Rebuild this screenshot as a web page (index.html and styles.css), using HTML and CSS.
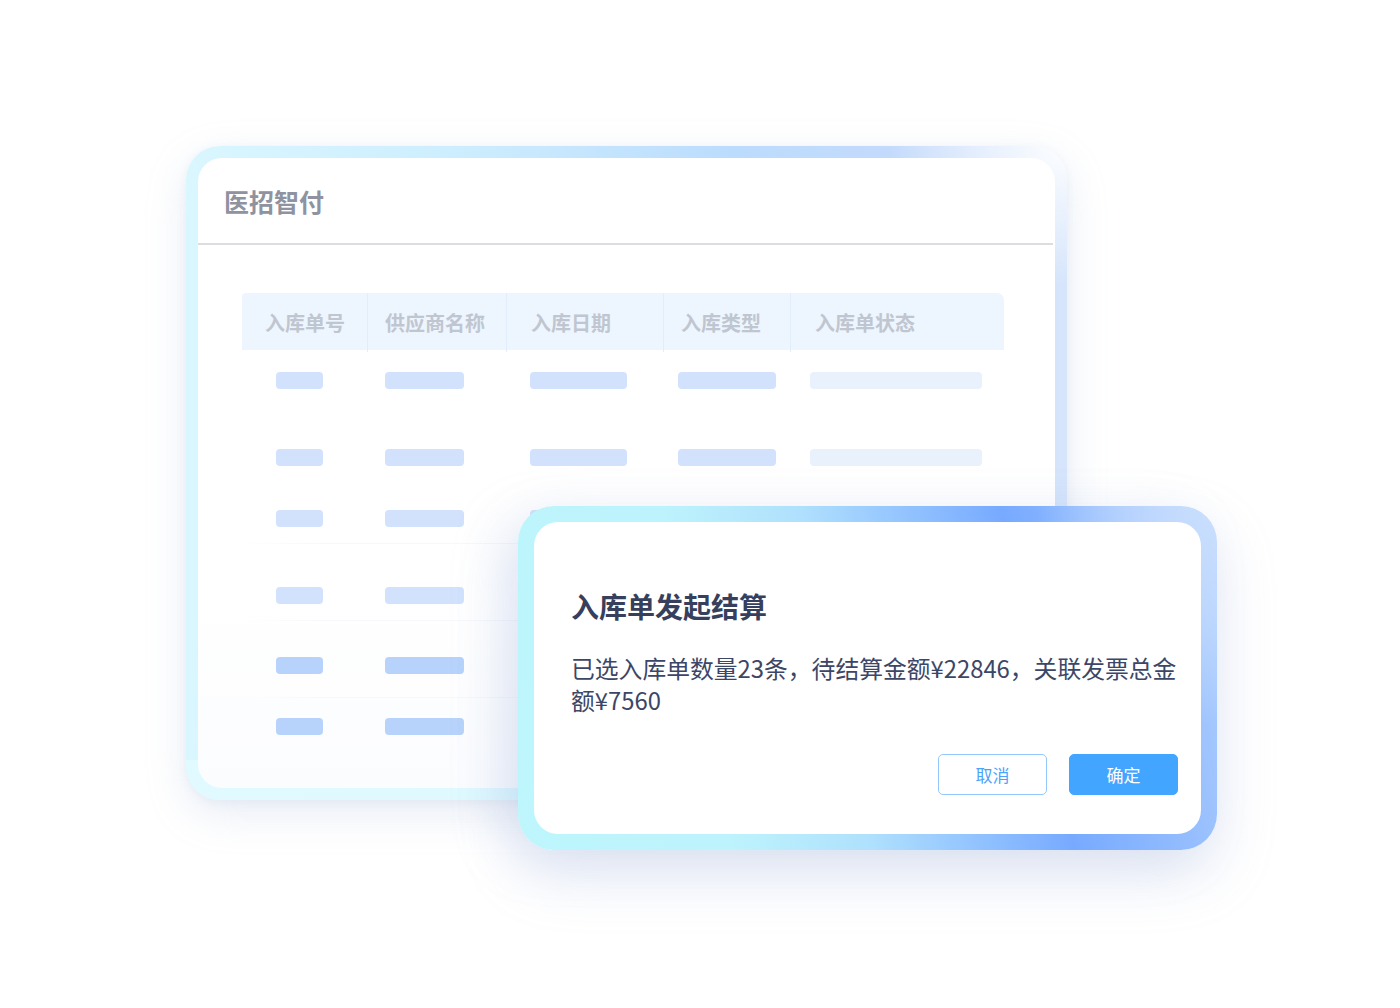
FILE: index.html
```html
<!DOCTYPE html>
<html lang="zh-CN">
<head>
<meta charset="utf-8">
<title>医招智付</title>
<link rel="stylesheet" href="styles.css">
</head>
<body>
<div class="stage">
  <section class="win back">
    <div class="win-inner back-inner">
      <header class="back-head">医招智付</header>
      <div class="table">
        <div class="thead">
          <div class="th">入库单号</div>
          <div class="th">供应商名称</div>
          <div class="th">入库日期</div>
          <div class="th">入库类型</div>
          <div class="th">入库单状态</div>
        </div>
        <div class="tbody">
          <div class="tr r1">
            <span class="bar"></span><span class="bar"></span><span class="bar"></span><span class="bar"></span><span class="bar pale"></span>
          </div>
          <div class="tr r2">
            <span class="bar"></span><span class="bar"></span><span class="bar"></span><span class="bar"></span><span class="bar pale"></span>
          </div>
          <div class="tr r3 sep">
            <span class="bar"></span><span class="bar"></span><span class="bar"></span><span class="bar"></span><span class="bar pale"></span>
          </div>
          <div class="tr r4 sep">
            <span class="bar"></span><span class="bar"></span><span class="bar"></span><span class="bar"></span><span class="bar pale"></span>
          </div>
          <div class="tr r5 sep dark">
            <span class="bar"></span><span class="bar"></span><span class="bar"></span><span class="bar"></span><span class="bar pale"></span>
          </div>
          <div class="tr r6 dark">
            <span class="bar"></span><span class="bar"></span><span class="bar"></span><span class="bar"></span><span class="bar pale"></span>
          </div>
        </div>
      </div>
    </div>
  </section>

  <section class="win dialog">
    <div class="win-inner dialog-inner">
      <h2 class="dlg-title">入库单发起结算</h2>
      <p class="dlg-text">已选入库单数量23条，待结算金额¥22846，关联发票总金<br>额¥7560</p>
      <div class="dlg-actions">
        <button class="btn btn-ghost">取消</button>
        <button class="btn btn-primary">确定</button>
      </div>
    </div>
  </section>
</div>
</body>
</html>
```

FILE: styles.css
```css
* { box-sizing: border-box; }
html, body { margin: 0; padding: 0; background: #ffffff; }
body {
  font-family: "Noto Sans CJK SC", "Noto Sans", "Liberation Sans", sans-serif;
}
.stage {
  position: relative;
  width: 1400px;
  height: 1008px;
  overflow: hidden;
  background: #ffffff;
}

/* floating windows */
.win {
  position: absolute;
}
.back {
  z-index: 1;
  left: 186px;
  top: 146px;
  width: 881px;
  height: 654px;
  padding: 12px;
  border-radius: 34px;
  background:
    radial-gradient(ellipse 180px 140px at 100% 0%, rgba(255,255,255,0.95), rgba(255,255,255,0) 100%),
    linear-gradient(90deg, #daf7ff 0%, #cdeefe 30%, #bcdcfd 62%, #c3dafc 80%, #d6e5fb 100%);
  box-shadow: 0 14px 40px rgba(150, 172, 210, 0.22), 0 2px 10px rgba(170, 190, 220, 0.15);
}
.back::after {
  content: "";
  position: absolute;
  left: 0; right: 0; bottom: 0;
  height: 40px;
  border-radius: 0 0 34px 34px;
  background: linear-gradient(90deg, #e0faff 0%, #def8ff 60%, #c9e8fb 100%);
  z-index: 0;
}
.win-inner {
  position: relative;
  z-index: 1;
  width: 100%;
  height: 100%;
  background: #ffffff;
}
.back-inner {
  border-radius: 24px;
  overflow: hidden;
  background: linear-gradient(180deg, #ffffff 70%, #fbfcfe 100%);
}
.back-head {
  height: 87px;
  padding: 24px 0 0 26px;
  font-size: 25px;
  line-height: 38px;
  font-weight: 700;
  color: #8e939f;
  border-bottom: 2px solid #dcdde0;
  margin-right: 2px;
}

.table {
  margin: 48px 51px 0 44px;
}
.thead, .tr {
  display: grid;
  grid-template-columns: 125px 139px 157px 127px 213px;
}
.thead {
  height: 57px;
  background: #edf5ff;
  border-radius: 4px 7px 0 0;
}
.th {
  font-size: 20px;
  font-weight: 700;
  line-height: 59px;
  color: #c0c6d0;
  border-left: 1px solid #e1edfb;
  white-space: nowrap;
}
.th:nth-child(1) { border-left: 0; padding-left: 23px; }
.th:nth-child(2) { padding-left: 17px; }
.th:nth-child(3) { padding-left: 24px; }
.th:nth-child(4) { padding-left: 17px; }
.th:nth-child(5) { padding-left: 24px; }

.tbody { padding-top: 22px; }
.tr { position: relative; align-items: start; }
.bar {
  display: block;
  height: 17px;
  border-radius: 4px;
  background: #d2e2fd;
}
.bar:nth-child(1) { margin-left: 34px; width: 47px; }
.bar:nth-child(2) { margin-left: 18px; width: 79px; }
.bar:nth-child(3) { margin-left: 24px; width: 97px; }
.bar:nth-child(4) { margin-left: 15px; width: 98px; }
.bar:nth-child(5) { margin-left: 20px; width: 172px; }
.bar.pale { background: #e9f1fd; }
.tr.dark .bar { background: #b7d3fb; }
.tr.dark .bar.pale { background: #dfeafc; }

.r1 { height: 77px; }
.r2 { height: 61px; }
.r3 { height: 77px; }
.r4 { height: 70px; }
.r5 { height: 61px; }
.r6 { height: 40px; }
.tr.sep::after {
  content: "";
  position: absolute;
  left: 0; right: 0;
  top: 33px;
  height: 1px;
  background: linear-gradient(90deg, rgba(240,244,250,0) 0%, #f6f8fb 10%, #f6f8fb 90%, rgba(240,244,250,0) 100%);
}
.r5.sep::after { top: 40px; }

/* dialog */
.dialog {
  z-index: 2;
  left: 518px;
  top: 506px;
  width: 699px;
  height: 344px;
  padding: 16px;
  border-radius: 36px;
  background:
    radial-gradient(ellipse 180px 220px at 100% 0%, rgba(204,224,253,0.95) 0%, rgba(200,222,253,0.6) 55%, rgba(200,222,253,0) 100%),
    linear-gradient(78deg, #bef6fc 0%, #bdf3fc 28%, #afe0fd 46%, #8dbeff 62%, #77aaff 72%, #90bafe 85%, #b0cffd 100%);
  box-shadow: 0 24px 60px rgba(135, 160, 210, 0.24), -20px 10px 50px rgba(170, 190, 225, 0.18);
}
.dialog-inner {
  border-radius: 24px;
  padding: 64px 22px 0 37px;
}
.dlg-title {
  margin: 0;
  font-size: 28px;
  line-height: 40px;
  font-weight: 700;
  color: #363f5c;
}
.dlg-text {
  margin: 26px 0 0 0;
  font-size: 23.8px;
  line-height: 32px;
  font-weight: 400;
  color: #3c4666;
  white-space: nowrap;
}
.dlg-actions {
  display: flex;
  justify-content: flex-end;
  gap: 22px;
  margin-top: 38px;
  padding-right: 1px;
}
.btn {
  width: 109px;
  height: 41px;
  border-radius: 5px;
  font-family: "Noto Sans CJK SC", "Noto Sans", sans-serif;
  font-size: 17px;
  line-height: 39px;
  padding: 0;
  cursor: pointer;
}
.btn-ghost {
  background: #ffffff;
  border: 1px solid #94c8fd;
  color: #4aa3fc;
}
.btn-primary {
  background: #42a5ff;
  border: 1px solid #42a5ff;
  color: #ffffff;
}
```
